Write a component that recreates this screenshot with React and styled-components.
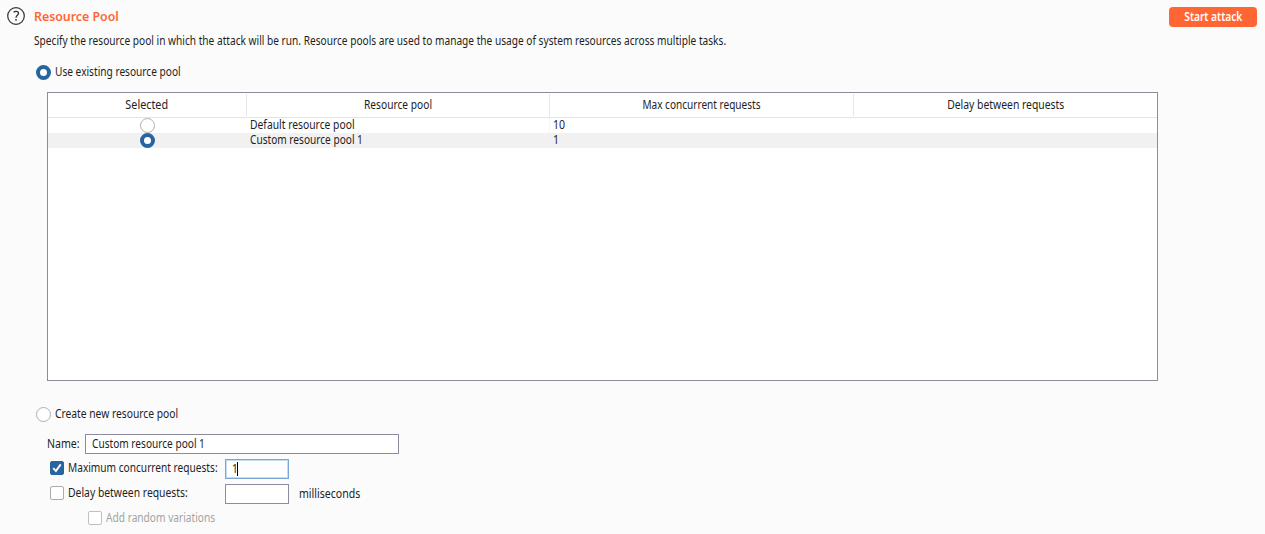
import React from "react";
import styled, { createGlobalStyle, css } from "styled-components";

const GlobalStyle = createGlobalStyle`
  * { box-sizing: border-box; }
  body {
    margin: 0;
    background: #fbfbfb;
    color: #1e1e1e;
    font-family: "Noto Sans", "Open Sans", sans-serif;
    font-size: 12px;
    line-height: 16px;
  }
`;

const Page = styled.main`
  display: flex;
  align-items: flex-start;
  width: 1265px;
  height: 534px;
  padding: 7px 8px 0 7px;
  overflow: hidden;
`;

const HelpIcon = styled.svg`
  flex: none;
  width: 18px;
  height: 18px;
`;

const Content = styled.section`
  flex: 1;
  padding-left: 9px;
`;

/* Condensed lettering: $w is the horizontal proportion of the glyphs. */
const Text = styled.span`
  display: inline-block;
  min-width: 0;
  white-space: nowrap;
  transform: scaleX(${(p) => p.$w || 0.845});
  transform-origin: ${(p) => (p.$center ? "center" : "left")};
  color: ${(p) => (p.$muted ? "#a3a3a3" : "inherit")};
`;

const Title = styled.h1`
  margin: 0;
  color: #ff6633;
  font-size: 13px;
  font-weight: 600;
  line-height: 18px;
`;

const Description = styled.p`
  margin: 8px 0 0;
  height: 16px;
`;

const StartButton = styled.button`
  flex: none;
  width: 88px;
  height: 20px;
  padding: 0;
  border: 0;
  border-radius: 4px;
  background: #ff6633;
  color: #fff;
  font: 600 12px/20px "Noto Sans", sans-serif;
`;

const RadioLine = styled.label`
  display: flex;
  align-items: center;
  gap: 4px;
  height: 16px;
  margin: ${(p) => p.$top}px 0 0 2px;
`;

const Radio = styled.span`
  flex: none;
  width: 15px;
  height: 15px;
  border-radius: 50%;
  background: #fff;
  border: 1px solid #b0b0b0;
  ${(p) => p.$on && css`border: 4px solid #2665a0;`}
`;

const Table = styled.div`
  width: 1111px;
  height: 289px;
  margin: 12px 0 0 13px;
  border: 1px solid #8d8b9f;
  background: #fff;
`;

const Row = styled.div`
  display: grid;
  grid-template-columns: 199px 303px 304px 303px;
  height: 15px;
  line-height: 14px;
  background: ${(p) => (p.$selected ? "#f1f1f1" : "#fff")};
`;

const HeaderRow = styled(Row)`
  height: 25px;
  line-height: 22px;
  padding: 1px 0;
  border-bottom: 1px solid #e4e4e4;
  text-align: center;
`;

const HeaderCell = styled.div`
  height: 22px;
  border-right: 1px solid #e6e6e6;
  &:last-child { border-right: 0; }
`;

const Cell = styled.div`
  display: flex;
  height: 15px;
  justify-content: ${(p) => (p.$center ? "center" : "flex-start")};
  padding-left: ${(p) => (p.$center ? 0 : p.$pad || 3)}px;
  border-right: ${(p) => (p.$rule ? "1px solid #f6f6f6" : "0")};
`;

const Field = styled.div`
  display: flex;
  align-items: center;
  width: ${(p) => p.$width}px;
  height: 20px;
  padding-left: 6px;
  border: 1px solid ${(p) => (p.$focus ? "#7ba6d8" : "#8d8b9f")};
  box-shadow: ${(p) => (p.$focus ? "inset 0 0 0 1px #c4dcf5" : "none")};
  background: #fff;
`;

const FieldDigits = styled.span`
  width: 5px;
`;

const Caret = styled.i`
  width: 1px;
  height: 14px;
  background: #000;
`;

const Form = styled.div`
  display: flex;
  flex-direction: column;
  gap: 5px;
  padding: 12px 0 0 13px;
`;

const FormRow = styled.div`
  display: flex;
  align-items: center;
  height: 20px;
  padding-left: ${(p) => p.$indent || 0}px;
`;

const NameLabel = styled.div`
  width: 38px;
`;

const CheckLabel = styled.label`
  display: flex;
  align-items: center;
  gap: 4px;
  width: 175px;
  padding-bottom: 2px;
`;

const Unit = styled.div`
  margin-left: 10px;
`;

const CheckBox = styled.svg`
  flex: none;
  width: 14px;
  height: 14px;
`;

const Check = ({ on, muted }) => (
  <CheckBox viewBox="0 0 14 14">
    <rect x=".5" y=".5" width="13" height="13" rx="1.5"
      fill={on ? "#2665a0" : "#fff"}
      stroke={on ? "#2665a0" : muted ? "#c0c0c0" : "#acacac"} />
    {on && <path d="M3.2 7.2 5.9 10 10.7 3.4" fill="none" stroke="#fff" strokeWidth="1.9" />}
  </CheckBox>
);

const columns = [
  ["Selected", 0.9],
  ["Resource pool", 0.85],
  ["Max concurrent requests", 0.838],
  ["Delay between requests", 0.865],
];

const pools = [
  { name: "Default resource pool", w: 0.86, max: "10" },
  { name: "Custom resource pool 1", w: 0.843, max: "1", selected: true },
];

export default function App() {
  return (
    <>
      <GlobalStyle />
      <Page>
        <HelpIcon viewBox="0 0 18 18" fill="none" stroke="#303030">
          <circle cx="9" cy="9" r="8.3" strokeWidth="1.2" />
          <path d="M6.6 5.2C7.4 4.5 8.2 4.3 9.1 4.3c1.6 0 2.4.8 2.4 1.9 0 2-2.5 2.2-2.5 4.5" strokeWidth="1.3" />
          <path d="M9 12.1v1.7" strokeWidth="1.4" />
        </HelpIcon>
        <Content>
          <Title><Text $w={0.95}>Resource Pool</Text></Title>
          <Description>
            <Text>Specify the resource pool in which the attack will be run. Resource pools are used to manage the usage of system resources across multiple tasks.</Text>
          </Description>
          <RadioLine $top={15}>
            <Radio $on />
            <Text>Use existing resource pool</Text>
          </RadioLine>
          <Table>
            <HeaderRow>
              {columns.map(([label, w]) => (
                <HeaderCell key={label}><Text $center $w={w}>{label}</Text></HeaderCell>
              ))}
            </HeaderRow>
            {pools.map((pool) => (
              <Row key={pool.name} $selected={pool.selected}>
                <Cell $center><Radio $on={pool.selected} /></Cell>
                <Cell $rule={!pool.selected}><Text $w={pool.w}>{pool.name}</Text></Cell>
                <Cell $pad={2.5}><Text $w={0.88}>{pool.max}</Text></Cell>
                <Cell />
              </Row>
            ))}
          </Table>
          <RadioLine $top={25}>
            <Radio />
            <Text $w={0.856}>Create new resource pool</Text>
          </RadioLine>
          <Form>
            <FormRow>
              <NameLabel><Text $w={0.88}>Name:</Text></NameLabel>
              <Field $width={314}><Text $w={0.843}>Custom resource pool 1</Text></Field>
            </FormRow>
            <FormRow $indent={3}>
              <CheckLabel><Check on /><Text $w={0.845}>Maximum concurrent requests:</Text></CheckLabel>
              <Field $width={64} $focus><FieldDigits><Text>1</Text></FieldDigits><Caret /></Field>
            </FormRow>
            <FormRow $indent={3}>
              <CheckLabel><Check /><Text $w={0.864}>Delay between requests:</Text></CheckLabel>
              <Field $width={64} />
              <Unit><Text $w={0.88}>milliseconds</Text></Unit>
            </FormRow>
            <FormRow $indent={41}>
              <CheckLabel><Check muted /><Text $muted $w={0.847}>Add random variations</Text></CheckLabel>
            </FormRow>
          </Form>
        </Content>
        <StartButton><Text $center>Start attack</Text></StartButton>
      </Page>
    </>
  );
}
